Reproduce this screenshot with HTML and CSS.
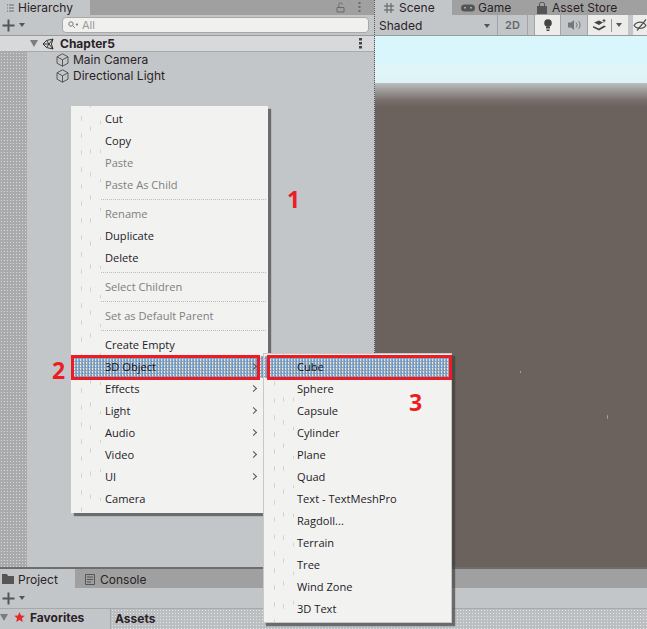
FILE: index.html
```html
<!DOCTYPE html>
<html>
    <head>
        <meta charset="utf-8">
        <meta name="viewport" content="width=device-width, initial-scale=1">
        <title>Hierarchy - Create Cube</title>
        <link rel="stylesheet" href="styles.css">
    </head>
    <body>
        <div class="editor">
            <div class="top">
                <section class="hierarchy">
                    <div class="tabs">
                        <div class="tab active hier-tab">
                            <svg class="ico" width="7" height="8" viewBox="0 0 7 8"><path d="M0 1h1M2 1h5M0 4h1M2 4h5M0 7h1M2 7h5" stroke="#6a6a6a" fill="none"/></svg>
                            Hierarchy
                        </div>
                        <div class="tab-fill">
                            <svg width="9" height="11" viewBox="0 0 9 11"><path d="M1 5.500h7v4.500h-7zM2.800 5.500v-3a1.700 1.700 0 0 1 3.400 0" stroke="#6a6a6a" fill="none"/></svg>
                            <svg width="3" height="11" viewBox="0 0 3 11"><path d="M0.500 0h2v2h-2zM0.500 4h2v2h-2zM0.500 8h2v2h-2z" fill="#6a6a6a"/></svg>
                        </div>
                    </div>
                    <div class="toolbar">
                        <svg class="plus" width="13" height="13" viewBox="0 0 13 13"><path d="M6.500 0.500v12M0.500 6.500h12" stroke="#555" stroke-width="2" fill="none"/></svg>
                        <span class="caret"></span>
                        <div class="search">
                            <svg width="10" height="8" viewBox="0 0 10 8"><circle cx="3" cy="3" r="2.200" stroke="#777" fill="none"/><path d="M5 5l2 2M8 3h2l-1 1.500z" stroke="#777" stroke-width="0.800" fill="#777"/></svg>
                            All
                        </div>
                    </div>
                    <div class="scene-row">
                        <span class="fold"></span>
                        <svg class="unity" width="12" height="12" viewBox="0 0 12 12"><path d="M11 1L4.500 2.500 1 6l3.500 3.500L11 11l-1.600-5zM4.500 2.500L7 6l-2.500 3.500M1 6h6M7 6l4-5M7 6l4 5" stroke="#333" fill="none"/></svg>
                        <span class="scene-name">Chapter5</span>
                        <svg class="row-dots" width="3" height="11" viewBox="0 0 3 11"><path d="M0 0h3v2.500h-3zM0 4h3v2.500h-3zM0 8h3v2.500h-3z" fill="#444"/></svg>
                    </div>
                    <div class="tree">
                        <div class="gutter"></div>
                        <div class="tree-list">
                            <div class="tree-item">
                                <svg class="cube" width="13" height="14" viewBox="0 0 13 14"><path d="M6.500 0.800l5.500 3v6.400l-5.500 3-5.500-3V3.800zM1 3.800l5.500 3 5.500-3M6.500 6.800v6.400" stroke="#555" fill="none"/></svg>
                                Main Camera
                            </div>
                            <div class="tree-item">
                                <svg class="cube" width="13" height="14" viewBox="0 0 13 14"><path d="M6.500 0.800l5.500 3v6.400l-5.500 3-5.500-3V3.800zM1 3.800l5.500 3 5.500-3M6.500 6.800v6.400" stroke="#555" fill="none"/></svg>
                                Directional Light
                            </div>
                        </div>
                    </div>
                </section>
                <section class="scene">
                    <div class="tabs">
                        <div class="tab active scene-tab">
                            <svg class="ico" width="10" height="10" viewBox="0 0 10 10"><path d="M3 0v10M7 0v10M0 3h10M0 7h10" stroke="#5a5a5a" fill="none"/></svg>
                            Scene
                        </div>
                        <div class="tab game-tab">
                            <svg class="ico" width="14" height="8" viewBox="0 0 14 8"><rect x="0" y="0.500" width="14" height="7" rx="3.500" fill="#555"/><path d="M3 3h2v1.500h-2zM9 3h2v1.500h-2z" fill="#aaa"/></svg>
                            Game
                        </div>
                        <div class="tab store-tab">
                            <svg class="ico" width="10" height="12" viewBox="0 0 10 12"><path d="M0 4h10v8h-10z" fill="#555"/><path d="M2.500 4v-2a2.500 1.800 0 0 1 5 0v2" stroke="#555" fill="none"/></svg>
                            Asset Store
                        </div>
                    </div>
                    <div class="scene-bar">
                        <div class="shaded">Shaded<span class="caret"></span></div>
                        <div class="bar-btn two-d">2D</div>
                        <div class="bar-btn on bulb">
                            <svg width="10" height="13" viewBox="0 0 10 13"><circle cx="5" cy="4" r="3.800" fill="#444"/><path d="M3 7.500h4v2h-4zM3.500 10.500h3v1.500h-3z" fill="#444"/></svg>
                        </div>
                        <div class="bar-btn audio">
                            <svg width="13" height="10" viewBox="0 0 13 10"><path d="M0 2.500h3l3-2.500v10l-3-2.500h-3z" fill="#777"/><path d="M8 2.500a3.500 3.500 0 0 1 0 5M10.500 1a6 6 0 0 1 0 8" stroke="#777" fill="none"/></svg>
                        </div>
                        <div class="bar-btn on layers">
                            <svg width="14" height="12" viewBox="0 0 14 12"><path d="M0 7l6 2.500 5-3 2 1-7 4-6-3zM1 3.500l5-2 4 2-4 2.500z" fill="#444"/><path d="M11 0v3.500M9.500 1.700h3" stroke="#444"/></svg>
                            <i class="split"></i>
                            <span class="caret"></span>
                        </div>
                        <div class="bar-btn on eye">
                            <svg width="15" height="12" viewBox="0 0 15 12"><path d="M1 6.500c3-4.500 9-4.500 12 0-3 4-9 4-12 0zM4 11.500l9-11" stroke="#555" stroke-width="1.200" fill="none"/></svg>
                        </div>
                    </div>
                    <div class="viewport">
                        <div class="sky"></div>
                        <div class="horizon"></div>
                        <div class="ground"></div>
                    </div>
                </section>
            </div>
            <section class="project">
                <div class="dither-line"></div>
                <div class="tabs bottom-tabs">
                    <div class="tab active project-tab">
                        <svg class="ico" width="12" height="10" viewBox="0 0 12 10"><path d="M0 0h5l1 2h6v8h-12z" fill="#555"/></svg>
                        Project
                    </div>
                    <div class="tab console-tab">
                        <svg class="ico" width="10" height="11" viewBox="0 0 10 11"><path d="M0.500 0.500h9v10h-9zM2 3h6M2 5.500h6M2 8h4" stroke="#555" fill="none"/></svg>
                        Console
                    </div>
                </div>
                <div class="toolbar small">
                    <svg class="plus" width="13" height="13" viewBox="0 0 13 13"><path d="M6.500 0.500v12M0.500 6.500h12" stroke="#555" stroke-width="2" fill="none"/></svg>
                    <span class="caret"></span>
                </div>
                <div class="browser">
                    <div class="favorites">
                        <span class="fold"></span>
                        <svg class="star" width="11" height="10" viewBox="0 0 12 11"><path d="M6 0l1.700 3.800 4.100 0.400-3.100 2.700 0.900 4-3.600-2.100-3.600 2.100 0.900-4L0.200 4.200l4.100-0.400z" fill="#e02b2b"/></svg>
                        Favorites
                    </div>
                    <div class="assets">Assets</div>
                </div>
            </section>
        </div>

        <div class="menu main-menu">
            <div class="item">Cut</div>
            <div class="item">Copy</div>
            <div class="item off">Paste</div>
            <div class="item off">Paste As Child</div>
            <div class="sep"></div>
            <div class="item off">Rename</div>
            <div class="item">Duplicate</div>
            <div class="item">Delete</div>
            <div class="sep"></div>
            <div class="item off">Select Children</div>
            <div class="sep"></div>
            <div class="item off">Set as Default Parent</div>
            <div class="sep"></div>
            <div class="item">Create Empty</div>
            <div class="item hot more">3D Object</div>
            <div class="item more">Effects</div>
            <div class="item more">Light</div>
            <div class="item more">Audio</div>
            <div class="item more">Video</div>
            <div class="item more">UI</div>
            <div class="item">Camera</div>
        </div>
        <div class="menu sub-menu">
            <div class="item hot">Cube</div>
            <div class="item">Sphere</div>
            <div class="item">Capsule</div>
            <div class="item">Cylinder</div>
            <div class="item">Plane</div>
            <div class="item">Quad</div>
            <div class="item">Text - TextMeshPro</div>
            <div class="item">Ragdoll...</div>
            <div class="item">Terrain</div>
            <div class="item">Tree</div>
            <div class="item">Wind Zone</div>
            <div class="item">3D Text</div>
        </div>

        <div class="mark box-a"></div>
        <div class="mark box-b"></div>
        <div class="num num-1">1</div>
        <div class="num num-2">2</div>
        <div class="num num-3">3</div>
    </body>
</html>
```

FILE: styles.css
```css
html, body{
    margin: 0;
    height: 100%;
    overflow: hidden;
}
body{
    position: relative;
    background-color: #c3c6c9;
    color: #2a2226;
    font-family: "Inter", "Liberation Sans", sans-serif;
    font-size: 12px;
}
.editor{
    display: flex;
    flex-direction: column;
    height: 629px;
}
.top{
    display: flex;
    height: 567px;
}

/* panels */
.hierarchy{
    width: 374px;
    flex-shrink: 0;
    display: flex;
    flex-direction: column;
}
.scene{
    flex: 1;
    min-width: 0;
    display: flex;
    flex-direction: column;
    border-left: 1px dotted #555;
}
.tabs{
    display: flex;
    height: 15px;
    background-color: #a0a0a0;
    line-height: 14px;
}
.tab{
    display: flex;
    align-items: center;
    gap: 5px;
    box-sizing: border-box;
    padding-left: 7px;
    flex-shrink: 0;
}
.tab.active{
    background-color: #c3c6c9;
}
.hier-tab{
    width: 90px;
    gap: 4px;
}
.tab-fill{
    flex: 1;
    display: flex;
    justify-content: flex-end;
    align-items: center;
    gap: 13px;
    padding-right: 13px;
}
.scene-tab{
    width: 77px;
    padding-left: 9px;
}
.game-tab{
    width: 76px;
    padding-left: 9px;
    gap: 3px;
}
.store-tab{
    padding-left: 9px;
}
.toolbar{
    display: flex;
    align-items: center;
    height: 20px;
    padding-left: 2px;
    border-bottom: 1px solid #9a9a9a;
}
.toolbar.small{
    border-bottom: 1px solid #a8a8a8;
}
.plus{
    margin-right: 4px;
}
.caret{
    display: inline-block;
    width: 0;
    height: 0;
    border-left: 3.500px solid transparent;
    border-right: 3.500px solid transparent;
    border-top: 4px solid #555;
}
.search{
    display: flex;
    align-items: center;
    gap: 4px;
    box-sizing: border-box;
    flex: 1;
    height: 16px;
    margin-left: 37px;
    margin-right: 5px;
    padding-left: 5px;
    background-color: #f0f0ee;
    border: 1px solid #a9a9a9;
    border-radius: 4px;
    color: #9a9a9a;
    font-size: 11px;
}

/* hierarchy tree */
.scene-row{
    display: flex;
    align-items: center;
    height: 15px;
    padding-left: 30px;
    font-weight: 700;
    background-color: #d8d9da;
    background-image: radial-gradient(#eeeeee 0.600px, transparent 0.700px);
    background-size: 2px 2px;
    border-bottom: 1px solid #a9a9a9;
}
.fold{
    display: inline-block;
    width: 0;
    height: 0;
    border-left: 4px solid transparent;
    border-right: 4px solid transparent;
    border-top: 7px solid #7d7d7d;
}
.unity{
    margin-left: 4px;
    margin-right: 6px;
}
.scene-name{
    flex: 1;
}
.row-dots{
    margin-right: 12px;
}
.tree{
    flex: 1;
    display: flex;
}
.gutter{
    width: 27px;
    background-color: #a8aaac;
    background-image: radial-gradient(#d9dadb 0.600px, transparent 0.700px);
    background-size: 3px 3px;
}
.tree-list{
    flex: 1;
}
.tree-item{
    display: flex;
    align-items: center;
    gap: 4px;
    box-sizing: border-box;
    height: 16px;
    padding-left: 29px;
    padding-bottom: 1px;
}

/* scene view */
.scene-bar{
    display: flex;
    height: 20px;
    border-bottom: 1px solid #9a9a9a;
    line-height: 20px;
    overflow: hidden;
}
.shaded{
    display: flex;
    align-items: center;
    justify-content: space-between;
    box-sizing: border-box;
    width: 120px;
    padding-top: 1px;
    padding-left: 4px;
    padding-right: 5px;
    flex-shrink: 0;
}
.bar-btn{
    display: flex;
    align-items: center;
    justify-content: center;
    flex-shrink: 0;
    box-sizing: border-box;
    height: 20px;
    border-left: 1px solid #a2a4a6;
}
.bar-btn.on{
    background-color: #ececea;
}
.two-d{
    width: 31px;
    margin-left: 2px;
    border-right: 1px solid #a2a4a6;
    margin-right: 6px;
    color: #666;
    font-weight: 600;
    font-size: 11px;
}
.bulb{
    width: 26px;
}
.audio{
    width: 27px;
}
.layers{
    width: 41px;
    gap: 4px;
    justify-content: flex-start;
    padding-left: 5px;
}
.split{
    width: 1px;
    height: 13px;
    background-color: #999;
}
.eye{
    width: 28px;
    margin-left: 5px;
    justify-content: flex-start;
    padding-left: 0;
    border-left: 0;
}
.viewport{
    flex: 1;
    display: flex;
    flex-direction: column;
}
.sky{
    height: 47px;
    background: linear-gradient(#d9f6fd 0, #d9f6fd 24px, #e2f5f7 34px, #dcf3f6 100%);
}
.horizon{
    height: 24px;
    background: linear-gradient(#bbbfc0, #9a9795 35%, #7a716e 70%, #6b615d);
}
.ground{
    flex: 1;
    background-color: #6b615d;
    background-image:
        radial-gradient(#a89f9b 0.500px, transparent 0.800px),
        radial-gradient(#a89f9b 0.500px, transparent 0.800px);
    background-size: 263px 470px, 179px 470px;
    background-position: 14px 30px, 143px 75px;
}

/* project window */
.project{
    flex: 1;
    display: flex;
    flex-direction: column;
}
.dither-line{
    height: 2px;
    background-color: #6d6d6d;
}
.bottom-tabs{
    height: 19px;
    line-height: 19px;
}
.bottom-tabs .tab{
    padding-top: 1px;
}
.project-tab{
    width: 75px;
    padding-left: 2px;
    gap: 4px;
}
.console-tab{
    padding-left: 10px;
}
.browser{
    flex: 1;
    display: flex;
    font-weight: 700;
}
.favorites{
    display: flex;
    align-items: center;
    gap: 5px;
    box-sizing: border-box;
    width: 111px;
    padding-left: 0;
    padding-bottom: 4px;
    border-right: 1px solid #a8a8a8;
}
.favorites .star{
    margin-left: 1px;
}
.assets{
    flex: 1;
    padding-left: 4px;
    padding-top: 2px;
    background-color: #bcbfc2;
    background-image: radial-gradient(#e2e3e4 0.600px, transparent 0.700px);
    background-size: 3px 3px;
}

/* context menus */
.menu{
    position: absolute;
    box-sizing: border-box;
    background-color: #f2f2f0;
    background-image:
        radial-gradient(#d2d2d0 0.500px, transparent 0.800px),
        radial-gradient(#d2d2d0 0.500px, transparent 0.800px),
        radial-gradient(#d2d2d0 0.500px, transparent 0.800px);
    background-size: 5px 17px, 7px 23px, 11px 29px;
    background-repeat: repeat-y;
    background-position: 8px 4px, 16px 11px, 24px 2px;
    box-shadow: 3px 3px 1px rgba(60, 60, 60, 0.65);
    font-family: "Open Sans", "Liberation Sans", sans-serif;
    font-size: 11.100px;
    color: #1e1a28;
}
.main-menu{
    left: 71px;
    top: 106px;
    width: 197px;
    height: 407px;
    padding-top: 2px;
}
.sub-menu{
    left: 263px;
    top: 353px;
    width: 189px;
    height: 270px;
    padding-top: 2px;
    border: 1px solid #c8c8c8;
}
.item{
    position: relative;
    height: 22px;
    line-height: 22px;
    padding-left: 34px;
}
.sub-menu .item{
    padding-left: 33px;
}
.item.off{
    color: #807f7f;
}
.item.hot{
    background-color: #8fc0ea;
    background-image: conic-gradient(#9aa5b0 25%, #4a9ae6 0 50%, #9aa5b0 0 75%, #dfe4e8 0);
    background-size: 3px 3px;
    color: #14141e;
}
.item.more::after{
    content: "";
    position: absolute;
    right: 12px;
    top: 8px;
    width: 5px;
    height: 5px;
    box-sizing: border-box;
    border-top: 1px solid #555;
    border-right: 1px solid #555;
    transform: rotate(45deg);
}
.sep{
    height: 7px;
    margin-left: 30px;
    margin-right: 2px;
    background-image: linear-gradient(90deg, #bbb 50%, transparent 50%);
    background-size: 2px 1px;
    background-repeat: repeat-x;
    background-position: 0 3px;
}

/* red annotations on top of the shot */
.mark{
    position: absolute;
    box-sizing: border-box;
    height: 25px;
    top: 355px;
    border: 3px solid #ed1c24;
}
.box-a{
    left: 71px;
    width: 189px;
}
.box-b{
    left: 267px;
    width: 185px;
}
.num{
    position: absolute;
    color: #ed1c24;
    font-family: "Open Sans", "Liberation Sans", sans-serif;
    font-weight: 700;
    font-size: 23px;
    line-height: 24px;
}
.num-1{
    left: 287px;
    top: 187px;
}
.num-2{
    left: 52px;
    top: 358px;
}
.num-3{
    left: 409px;
    top: 390px;
}
```
